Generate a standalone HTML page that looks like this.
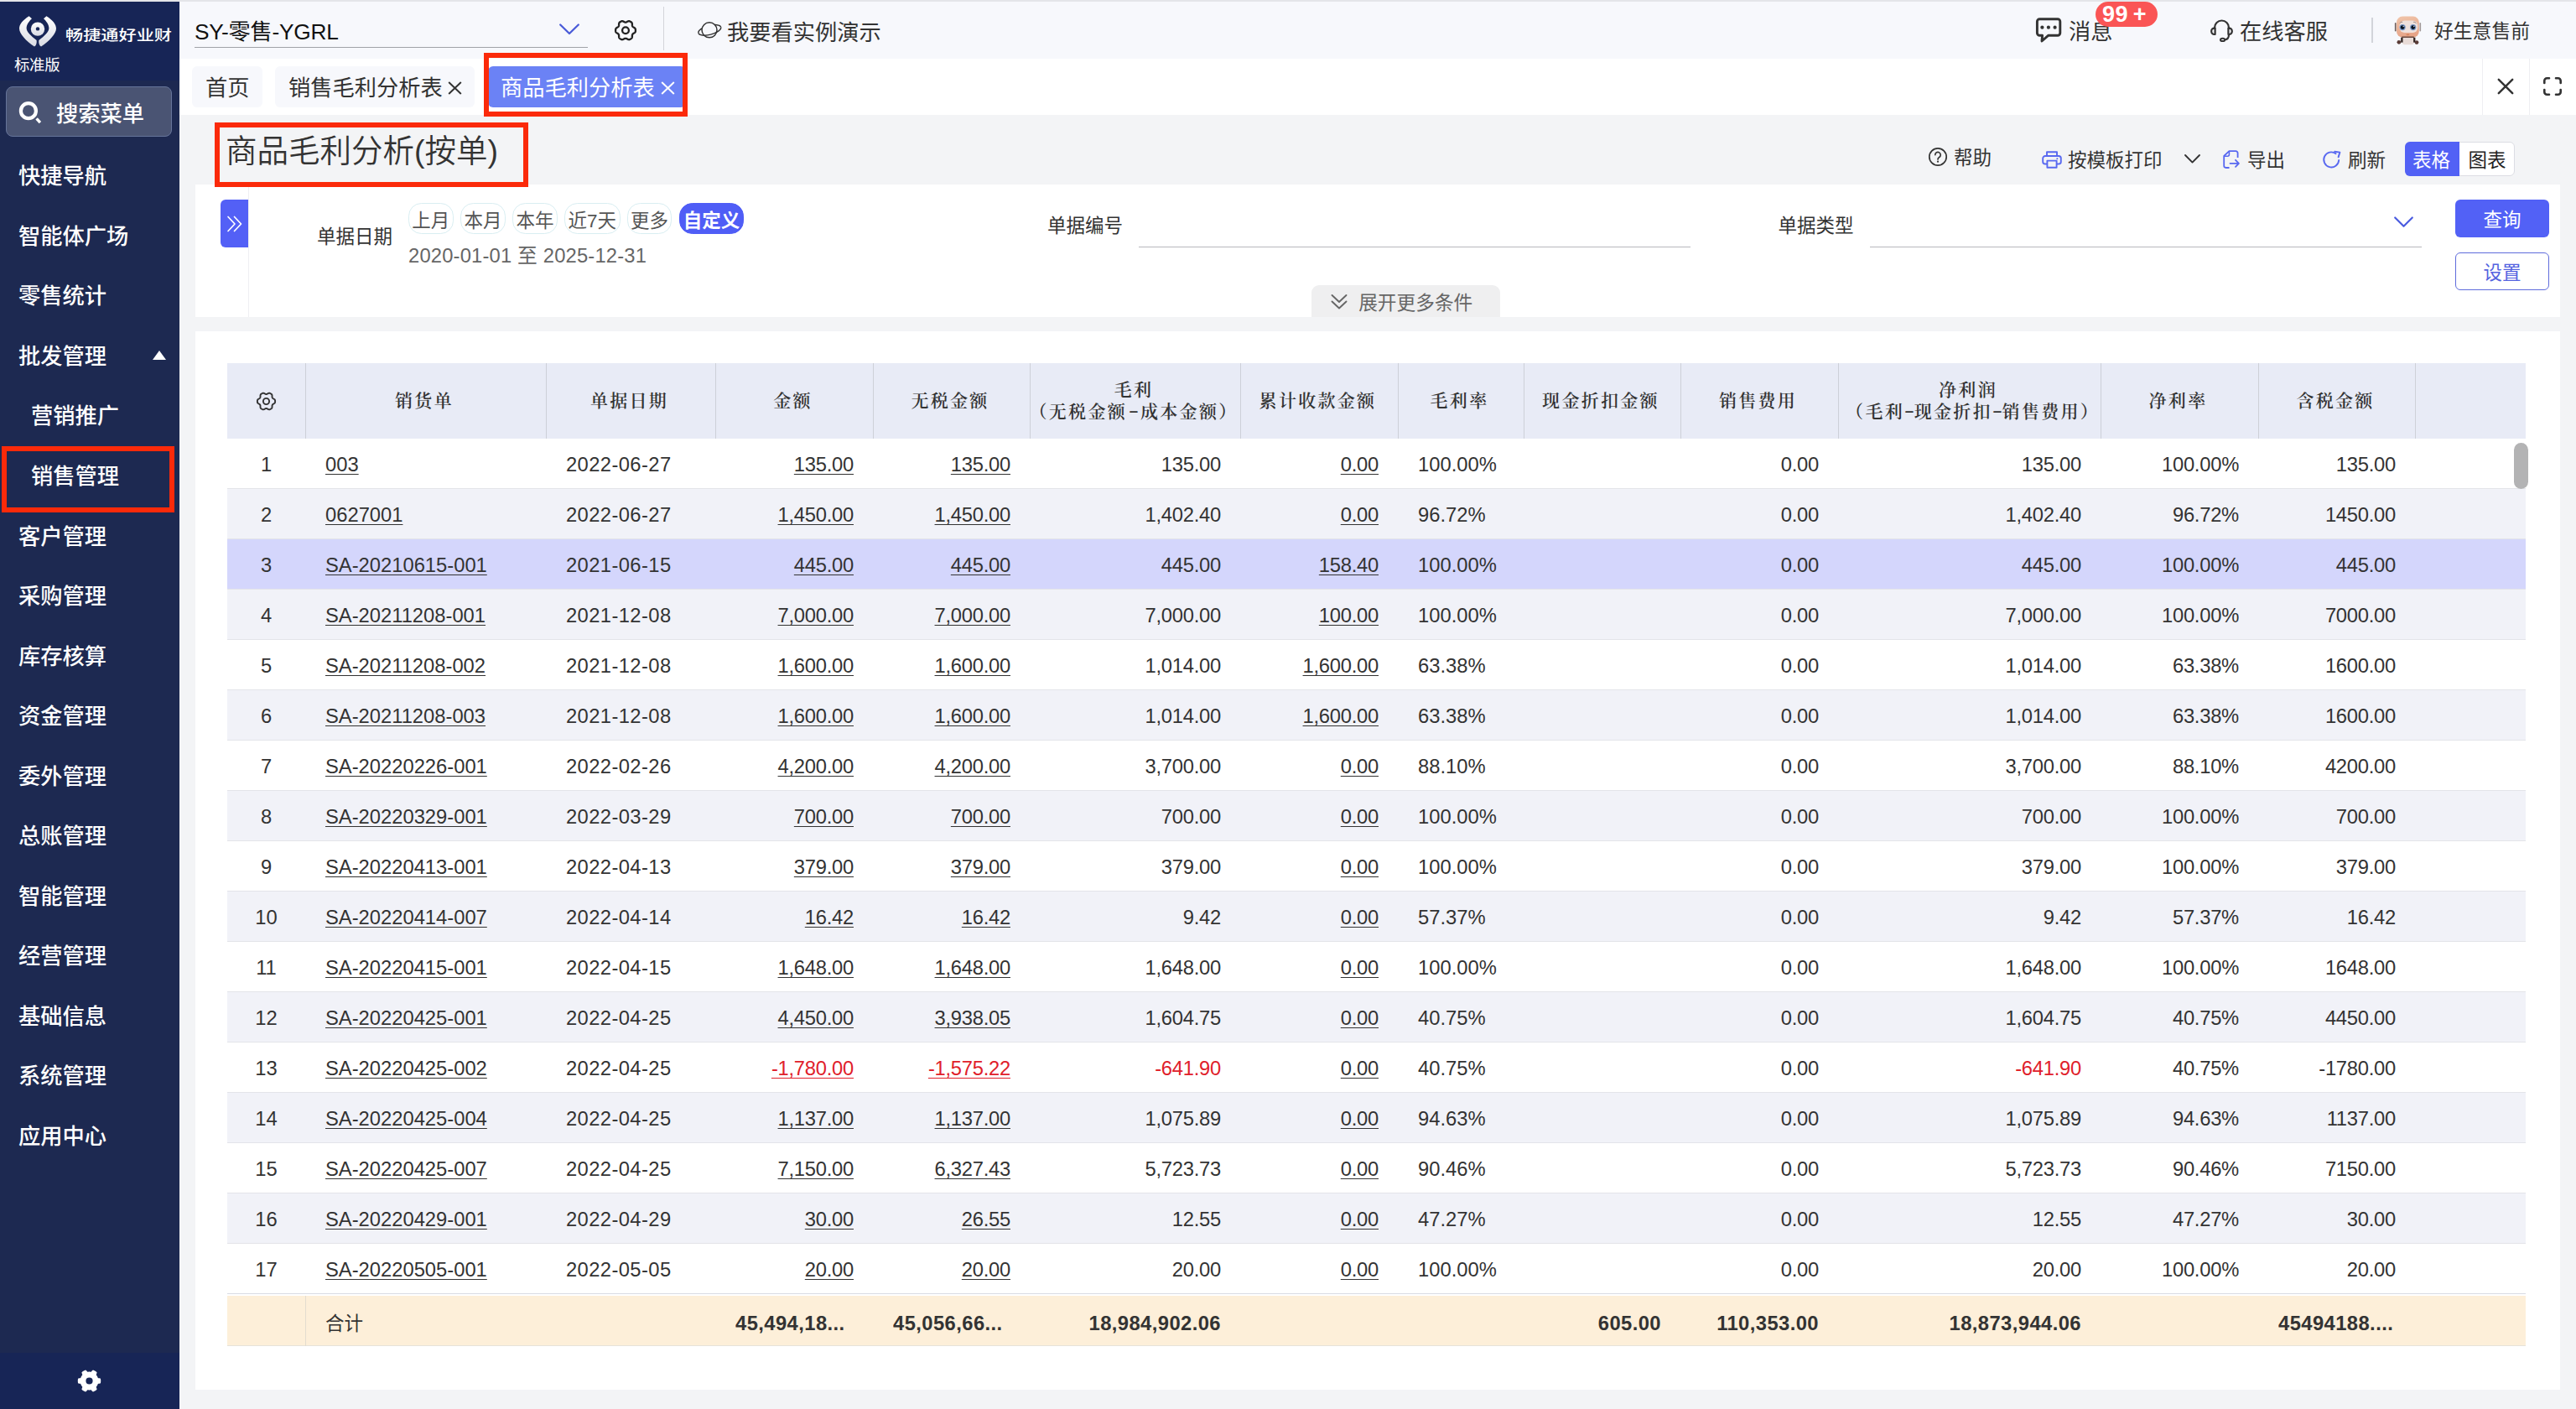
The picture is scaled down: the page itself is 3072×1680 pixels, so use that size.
<!DOCTYPE html>
<html lang="zh-CN"><head><meta charset="utf-8"><title>商品毛利分析表</title>
<style>
*{box-sizing:border-box;margin:0;padding:0}
html,body{width:3072px;height:1680px;overflow:hidden;background:#f3f4f6}
body{font-family:"Liberation Sans","Noto Sans CJK SC",sans-serif;color:#333;position:relative;-webkit-font-smoothing:antialiased}
.a{position:absolute}
.t{position:absolute;white-space:nowrap;height:40px;line-height:40px;margin-top:1.2px}
svg{position:absolute;overflow:visible}
.menu{color:#fff;font-size:26.25px;font-weight:500}
.tab{position:absolute;top:79px;height:49px;border-radius:6px;background:#f7f8fc}
.f26{font-size:26.25px}
.f22{font-size:22.5px}
.f23{font-size:23.75px}
.chip{position:absolute;top:242px;height:37px;border:1px solid #d9eef2;border-radius:15.5px;font-size:22.5px;line-height:42px;text-align:center;color:#555;white-space:nowrap;background:#fff}
.red{position:absolute;border:6px solid #fb2a0a;z-index:10}
.hd{position:absolute;top:433px;height:90px;background:#e8ebf6;border-left:1px solid #cdd0d8;font-family:"Liberation Serif","Noto Serif CJK SC",serif;font-weight:600;font-size:21px;letter-spacing:2.3px;color:#333;text-align:center;display:flex;align-items:center;justify-content:center;line-height:25.8px;padding-right:4px;padding-top:1.8px;white-space:nowrap}
.hy{display:inline-block;width:11.7px;text-align:center;letter-spacing:0;margin-right:0;transform:translateY(-2.5px) scaleX(1.7)}
.dt{letter-spacing:.4px}
.nm{letter-spacing:-.25px}
.row{position:absolute;left:271px;width:2741px;height:60px;border-bottom:1px solid #e3e4e9}
.c{position:absolute;top:0;height:59px;line-height:62.6px;font-size:23.75px;color:#333;white-space:nowrap;overflow:hidden}
.u{text-decoration:underline;text-decoration-thickness:1.3px;text-underline-offset:2.6px}
.neg{color:#e0202a}
.tot .c{line-height:66px}
.b{font-weight:700;letter-spacing:.43px}
</style></head>
<body>
<div class="a" style="left:0;top:0;width:3072px;height:2px;background:#e4e5e9"></div>
<div class="a" style="left:214px;top:2px;width:2858px;height:68px;background:#f7f8fc"></div>
<div class="a" style="left:214px;top:70px;width:2858px;height:67px;background:#fff"></div>
<div class="a" style="left:0;top:2px;width:214px;height:1678px;background:#1d2951"></div>
<div class="a" style="left:0;top:2px;width:214px;height:94px;background:#172556"></div>
<div class="a" style="left:0;top:1613px;width:214px;height:67px;background:#172556"></div>
<svg style="left:23px;top:19px" width="44" height="37" viewBox="0 0 44 37">
<defs><linearGradient id="lg" x1="0" y1="0" x2="0" y2="1"><stop offset="0" stop-color="#fff"/><stop offset="1" stop-color="#d9dbe3"/></linearGradient></defs>
<path d="M11.6 0.2 C4 5 0 10 0 15 C0 21 8 30 18 36.6 C20.5 35 21 32 20.6 29 C14 24 8.6 19 8.6 14.6 C8.6 10 12 6 15 3.2 Z" fill="url(#lg)"/>
<path d="M32.4 0.2 C40 5 44 10 44 15 C44 21 36 30 26 36.6 C23.5 35 23 32 23.4 29 C30 24 35.400 19 35.4 14.6 C35.4 10 32 6 29 3.2 Z" fill="url(#lg)"/>
<circle cx="22" cy="15.6" r="8.2" fill="url(#lg)"/><circle cx="22" cy="15.4" r="2.2" fill="#172556"/>
</svg>
<div class="t" style="left:78px;top:22px;font-size:17px;font-weight:500;color:#fff;transform:scaleX(1.245);transform-origin:0 50%;letter-spacing:0">畅捷通好业财</div>
<div class="t" style="left:17px;top:57px;font-size:18.4px;color:#fff;letter-spacing:-0.3px">标准版</div>
<div class="a" style="left:7px;top:103px;width:198px;height:60px;border-radius:8px;background:#4a5473;border:1px solid #66749a"></div>
<svg style="left:22px;top:120px" width="30" height="30" viewBox="0 0 30 30"><circle cx="11.9" cy="12.2" r="9" fill="none" stroke="#fff" stroke-width="4.2"/><path d="M21.6 21.4 L25.9 26.1" stroke="#fff" stroke-width="3.4"/></svg>
<div class="t menu" style="left:67px;top:115px">搜索菜单</div>
<div class="t menu" style="left:22px;top:189.2px">快捷导航</div>
<div class="t menu" style="left:22px;top:260.8px">智能体广场</div>
<div class="t menu" style="left:22px;top:332.3px">零售统计</div>
<div class="t menu" style="left:22px;top:403.8px">批发管理</div>
<div class="t menu" style="left:37px;top:475.3px">营销推广</div>
<div class="t menu" style="left:37px;top:546.8px">销售管理</div>
<div class="t menu" style="left:22px;top:618.4px">客户管理</div>
<div class="t menu" style="left:22px;top:689.9px">采购管理</div>
<div class="t menu" style="left:22px;top:761.4px">库存核算</div>
<div class="t menu" style="left:22px;top:832.9px">资金管理</div>
<div class="t menu" style="left:22px;top:904.4px">委外管理</div>
<div class="t menu" style="left:22px;top:976.0px">总账管理</div>
<div class="t menu" style="left:22px;top:1047.5px">智能管理</div>
<div class="t menu" style="left:22px;top:1119.0px">经营管理</div>
<div class="t menu" style="left:22px;top:1190.5px">基础信息</div>
<div class="t menu" style="left:22px;top:1262.0px">系统管理</div>
<div class="t menu" style="left:22px;top:1333.6px">应用中心</div>
<svg style="left:182px;top:418px" width="16" height="11" viewBox="0 0 16 11"><path d="M8 0 L16 11 L0 11 Z" fill="#fff"/></svg>
<svg style="left:93px;top:1633px" width="27" height="27" viewBox="0 0 27 27"><path d="M13.50 2.60 L13.86 2.61 L14.21 2.62 L14.57 2.65 L14.92 2.69 L15.28 2.75 L15.63 2.79 L16.09 2.37 L16.68 1.62 L17.32 0.89 L17.90 0.55 L18.33 0.68 L18.74 0.84 L19.15 1.02 L19.56 1.21 L19.96 1.42 L20.35 1.64 L20.73 1.87 L21.11 2.11 L21.48 2.36 L21.84 2.63 L22.19 2.91 L22.52 3.22 L22.51 3.88 L22.20 4.80 L21.84 5.69 L21.71 6.30 L21.93 6.59 L22.15 6.86 L22.36 7.15 L22.56 7.44 L22.76 7.74 L22.94 8.05 L23.11 8.36 L23.28 8.68 L23.43 9.00 L23.57 9.33 L23.70 9.66 L23.84 9.99 L24.43 10.18 L25.38 10.32 L26.33 10.51 L26.91 10.83 L27.02 11.27 L27.08 11.71 L27.13 12.16 L27.17 12.60 L27.19 13.05 L27.20 13.50 L27.19 13.95 L27.17 14.40 L27.13 14.84 L27.08 15.29 L27.02 15.73 L26.91 16.17 L26.33 16.49 L25.38 16.68 L24.43 16.82 L23.84 17.01 L23.70 17.34 L23.57 17.67 L23.43 18.00 L23.28 18.32 L23.11 18.64 L22.94 18.95 L22.76 19.26 L22.56 19.56 L22.36 19.85 L22.15 20.14 L21.93 20.41 L21.71 20.70 L21.84 21.31 L22.20 22.20 L22.51 23.12 L22.52 23.78 L22.19 24.09 L21.84 24.37 L21.48 24.64 L21.11 24.89 L20.73 25.13 L20.35 25.36 L19.96 25.58 L19.56 25.79 L19.15 25.98 L18.74 26.16 L18.33 26.32 L17.90 26.45 L17.32 26.11 L16.68 25.38 L16.09 24.63 L15.63 24.21 L15.28 24.25 L14.92 24.31 L14.57 24.35 L14.21 24.38 L13.86 24.39 L13.50 24.40 L13.14 24.39 L12.79 24.38 L12.43 24.35 L12.08 24.31 L11.72 24.25 L11.37 24.21 L10.91 24.63 L10.32 25.38 L9.68 26.11 L9.10 26.45 L8.67 26.32 L8.26 26.16 L7.85 25.98 L7.44 25.79 L7.04 25.58 L6.65 25.36 L6.27 25.13 L5.89 24.89 L5.52 24.64 L5.16 24.37 L4.81 24.09 L4.48 23.78 L4.49 23.12 L4.80 22.20 L5.16 21.31 L5.29 20.70 L5.07 20.41 L4.85 20.14 L4.64 19.85 L4.44 19.56 L4.24 19.26 L4.06 18.95 L3.89 18.64 L3.72 18.32 L3.57 18.00 L3.43 17.67 L3.30 17.34 L3.16 17.01 L2.57 16.82 L1.62 16.68 L0.67 16.49 L0.09 16.17 L-0.02 15.73 L-0.08 15.29 L-0.13 14.84 L-0.17 14.40 L-0.19 13.95 L-0.20 13.50 L-0.19 13.05 L-0.17 12.60 L-0.13 12.16 L-0.08 11.71 L-0.02 11.27 L0.09 10.83 L0.67 10.51 L1.62 10.32 L2.57 10.18 L3.16 9.99 L3.30 9.66 L3.43 9.33 L3.57 9.00 L3.72 8.68 L3.89 8.36 L4.06 8.05 L4.24 7.74 L4.44 7.44 L4.64 7.15 L4.85 6.86 L5.07 6.59 L5.29 6.30 L5.16 5.69 L4.80 4.80 L4.49 3.88 L4.48 3.22 L4.81 2.91 L5.16 2.63 L5.52 2.36 L5.89 2.11 L6.27 1.87 L6.65 1.64 L7.04 1.42 L7.44 1.21 L7.85 1.02 L8.26 0.84 L8.67 0.68 L9.10 0.55 L9.68 0.89 L10.32 1.62 L10.91 2.37 L11.37 2.79 L11.72 2.75 L12.08 2.69 L12.43 2.65 L12.79 2.62 L13.14 2.61 Z M13.5 9.4 A4.1 4.1 0 1 0 13.5 17.6 A4.1 4.1 0 1 0 13.5 9.4 Z" fill="#fff" fill-rule="evenodd"/></svg>
<div class="t f26" style="left:232px;top:17px;color:#111;letter-spacing:-.25px">SY-零售-YGRL</div>
<div class="a" style="left:232px;top:56px;width:469px;height:1px;background:#a0a2a8"></div>
<svg style="left:667px;top:28px" width="24" height="14" viewBox="0 0 24 14"><path d="M1.2 1.5 L12 12 L22.8 1.5" fill="none" stroke="#4a5bd8" stroke-width="2.3" stroke-linecap="round" stroke-linejoin="round"/></svg>
<svg style="left:733px;top:23.6px" width="26" height="25" viewBox="0 0 26 25"><path d="M13.00 2.60 L13.31 2.61 L13.63 2.57 L13.96 2.46 L14.30 2.29 L14.67 2.09 L15.06 1.87 L15.46 1.65 L15.88 1.45 L16.31 1.29 L16.74 1.19 L17.16 1.16 L17.55 1.22 L17.91 1.36 L18.26 1.53 L18.61 1.71 L18.95 1.89 L19.28 2.09 L19.61 2.31 L19.93 2.53 L20.24 2.77 L20.48 3.08 L20.67 3.46 L20.79 3.88 L20.87 4.33 L20.91 4.79 L20.92 5.25 L20.92 5.70 L20.93 6.11 L20.96 6.50 L21.03 6.84 L21.15 7.13 L21.31 7.40 L21.47 7.67 L21.66 7.93 L21.92 8.16 L22.24 8.37 L22.59 8.59 L22.98 8.81 L23.37 9.06 L23.75 9.32 L24.10 9.61 L24.40 9.93 L24.64 10.28 L24.79 10.65 L24.84 11.03 L24.87 11.42 L24.89 11.81 L24.90 12.20 L24.89 12.59 L24.87 12.98 L24.84 13.37 L24.79 13.75 L24.64 14.12 L24.40 14.47 L24.10 14.79 L23.75 15.08 L23.37 15.34 L22.98 15.59 L22.59 15.81 L22.24 16.03 L21.92 16.24 L21.66 16.47 L21.47 16.73 L21.31 17.00 L21.15 17.27 L21.03 17.56 L20.96 17.90 L20.93 18.29 L20.92 18.70 L20.92 19.15 L20.91 19.61 L20.87 20.07 L20.79 20.52 L20.67 20.94 L20.48 21.32 L20.24 21.63 L19.93 21.87 L19.61 22.09 L19.28 22.31 L18.95 22.51 L18.61 22.69 L18.26 22.87 L17.91 23.04 L17.55 23.18 L17.16 23.24 L16.74 23.21 L16.31 23.11 L15.88 22.95 L15.46 22.75 L15.06 22.53 L14.67 22.31 L14.30 22.11 L13.96 21.94 L13.63 21.83 L13.31 21.79 L13.00 21.80 L12.69 21.79 L12.37 21.83 L12.04 21.94 L11.70 22.11 L11.33 22.31 L10.94 22.53 L10.54 22.75 L10.12 22.95 L9.69 23.11 L9.26 23.21 L8.84 23.24 L8.45 23.18 L8.09 23.04 L7.74 22.87 L7.39 22.69 L7.05 22.51 L6.72 22.31 L6.39 22.09 L6.07 21.87 L5.76 21.63 L5.52 21.32 L5.33 20.94 L5.21 20.52 L5.13 20.07 L5.09 19.61 L5.08 19.15 L5.08 18.70 L5.07 18.29 L5.04 17.90 L4.97 17.56 L4.85 17.27 L4.69 17.00 L4.53 16.73 L4.34 16.47 L4.08 16.24 L3.76 16.03 L3.41 15.81 L3.02 15.59 L2.63 15.34 L2.25 15.08 L1.90 14.79 L1.60 14.47 L1.36 14.12 L1.21 13.75 L1.16 13.37 L1.13 12.98 L1.11 12.59 L1.10 12.20 L1.11 11.81 L1.13 11.42 L1.16 11.03 L1.21 10.65 L1.36 10.28 L1.60 9.93 L1.90 9.61 L2.25 9.32 L2.63 9.06 L3.02 8.81 L3.41 8.59 L3.76 8.37 L4.08 8.16 L4.34 7.93 L4.53 7.67 L4.69 7.40 L4.85 7.13 L4.97 6.84 L5.04 6.50 L5.07 6.11 L5.08 5.70 L5.08 5.25 L5.09 4.79 L5.13 4.33 L5.21 3.88 L5.33 3.46 L5.52 3.08 L5.76 2.77 L6.07 2.53 L6.39 2.31 L6.72 2.09 L7.05 1.89 L7.39 1.71 L7.74 1.53 L8.09 1.36 L8.45 1.22 L8.84 1.16 L9.26 1.19 L9.69 1.29 L10.12 1.45 L10.54 1.65 L10.94 1.87 L11.33 2.09 L11.70 2.29 L12.04 2.46 L12.37 2.57 L12.69 2.61 Z" fill="none" stroke="#222" stroke-width="2.3" stroke-linejoin="round"/><circle cx="13" cy="12.2" r="3.9" fill="none" stroke="#222" stroke-width="2.3"/></svg>
<div class="a" style="left:791px;top:8px;width:1px;height:52px;background:#d3d4da"></div>
<svg style="left:832px;top:24px" width="29" height="24" viewBox="0 0 29 24"><g transform="translate(14.3 11.9) rotate(-14.5)"><path d="M-13.8 0 A13.8 5.4 0 0 1 13.8 0" fill="none" stroke="#333" stroke-width="1.5"/></g><circle cx="14" cy="11.8" r="9" fill="#f7f8fc" stroke="#333" stroke-width="1.5"/><g transform="translate(14.3 11.9) rotate(-14.5)"><path d="M-13.8 0 A13.8 5.4 0 0 0 13.8 0" fill="none" stroke="#333" stroke-width="1.5"/></g></svg>
<div class="t f26" style="left:867px;top:18px">我要看实例演示</div>
<svg style="left:2427px;top:21px" width="32" height="31" viewBox="0 0 32 31"><path d="M5.4 1.7 H26.8 a3 3 0 0 1 3 3 V18.3 a3 3 0 0 1 -3 3 H15.6 L8 28 L8.6 21.3 H5.4 a3 3 0 0 1 -3 -3 V4.7 a3 3 0 0 1 3 -3 Z" fill="none" stroke="#333" stroke-width="2.9" stroke-linejoin="round"/><circle cx="8.4" cy="11.7" r="2.1" fill="#333"/><circle cx="15.9" cy="11.7" r="2.1" fill="#333"/><circle cx="23.6" cy="11.7" r="2.1" fill="#333"/></svg>
<div class="t f26" style="left:2467px;top:17px">消息</div>
<div class="a" style="left:2499px;top:2px;width:74px;height:30px;border-radius:15px;background:#fa5555;color:#fff;font-weight:700;font-size:27px;letter-spacing:.5px;word-spacing:-2.5px;padding-right:5px;line-height:31px;text-align:center;white-space:nowrap">99 +</div>
<svg style="left:2636px;top:22px" width="27" height="28" viewBox="0 0 27 28"><path d="M5 12.5 V11 a8.5 8.5 0 0 1 17 0 V12.5" fill="none" stroke="#333" stroke-width="2.2"/><path d="M5.6 11.6 H4.6 a3.4 3.4 0 0 0 -3.4 3.4 v0.600 a3.4 3.4 0 0 0 3.4 3.4 H5.6 Z" fill="none" stroke="#333" stroke-width="2.2" stroke-linejoin="round"/><path d="M21.4 11.6 H22.4 a3.4 3.4 0 0 1 3.4 3.4 v0.600 a3.4 3.4 0 0 1 -3.400 3.4 H21.4 Z" fill="none" stroke="#333" stroke-width="2.2" stroke-linejoin="round"/><path d="M22 19.400 C22 23.500 19.500 25.200 16.500 25.400" fill="none" stroke="#333" stroke-width="2.200"/><ellipse cx="14.6" cy="25.400" rx="2.6" ry="1.700" fill="none" stroke="#333" stroke-width="2"/></svg>
<div class="t f26" style="left:2671px;top:17px">在线客服</div>
<div class="a" style="left:2828px;top:21px;width:2px;height:30px;background:#d2d4da"></div>
<svg style="left:2855px;top:19px" width="33" height="35" viewBox="0 0 33 35">
<defs><linearGradient id="hg" x1="0" y1="0" x2="0.3" y2="1"><stop offset="0" stop-color="#f1c6ab"/><stop offset="1" stop-color="#e6a488"/></linearGradient></defs>
<rect x="0.9" y="8" width="1.6" height="10.6" rx="0.8" fill="#4a3630" opacity="0.8"/><rect x="30.5" y="8" width="1.6" height="10.6" rx="0.8" fill="#4a3630" opacity="0.5"/>
<path d="M9.9 25 H23.7 V31.5 a2.8 2.8 0 0 1 -2.8 2.8 H12.7 a2.8 2.8 0 0 1 -2.8 -2.8 Z" fill="#e9dcd8"/>
<rect x="8.2" y="25.6" width="2.3" height="6" fill="#2e2220"/><rect x="23.1" y="25.6" width="2.3" height="6" fill="#2e2220"/>
<circle cx="5.9" cy="31.3" r="2.4" fill="#5b3d38"/><circle cx="27" cy="31.6" r="2.400" fill="#5b3d38"/>
<rect x="3" y="0.6" width="26.8" height="24.900" rx="7" fill="url(#hg)"/>
<rect x="9" y="24.600" width="15" height="1.300" rx="0.600" fill="#6a4a40"/>
<rect x="6.5" y="5.4" width="21.800" height="14.600" rx="6" fill="#efe1dc"/>
<path d="M6.900 8.500 Q8.300 6.700 9.700 7.200 M23.500 7.200 Q25 6.700 26.300 8.500" fill="none" stroke="#8d7d78" stroke-width="0.900" stroke-linecap="round"/>
<circle cx="10.1" cy="13.6" r="3.600" fill="#7595c6"/><circle cx="22.7" cy="13.6" r="3.600" fill="#7595c6"/>
<circle cx="10.1" cy="13.6" r="2.400" fill="#0b1420"/><circle cx="22.700" cy="13.6" r="2.400" fill="#0b1420"/>
<circle cx="11.200" cy="12.500" r="0.700" fill="#dfe9f5"/><circle cx="23.800" cy="12.500" r="0.700" fill="#dfe9f5"/>
<ellipse cx="16.4" cy="22.300" rx="2" ry="0.900" fill="#d5835c"/>
</svg>
<div class="t" style="left:2903px;top:16px;font-size:22.8px">好生意售前</div>
<div class="tab" style="left:229px;width:84px"></div><div class="t f26" style="left:245px;top:84px">首页</div>
<div class="tab" style="left:328px;width:238px"></div><div class="t f26" style="left:344px;top:84px">销售毛利分析表</div>
<svg style="left:534px;top:97px" width="17" height="16" viewBox="0 0 17 16"><path d="M1.200 1 L15.800 15 M15.800 1 L1.200 15" stroke="#333" stroke-width="2" fill="none"/></svg>
<div class="tab" style="left:582px;width:236px;background:#6b82f5"></div><div class="t f26" style="left:597px;top:84px;color:#fff">商品毛利分析表</div>
<svg style="left:788px;top:97px" width="17" height="16" viewBox="0 0 17 16"><path d="M1.200 1 L15.800 15 M15.800 1 L1.200 15" stroke="#fff" stroke-width="2" fill="none"/></svg>
<div class="a" style="left:2960px;top:70px;width:1px;height:67px;background:#eeeef2"></div><div class="a" style="left:3016px;top:70px;width:1px;height:67px;background:#eeeef2"></div>
<svg style="left:2978px;top:93px" width="20" height="20" viewBox="0 0 20 20"><path d="M1.800 1.800 L18.200 18.200 M18.200 1.800 L1.800 18.200" stroke="#333" stroke-width="2.500" stroke-linecap="round" fill="none"/></svg>
<svg style="left:3033px;top:92px" width="22" height="22" viewBox="0 0 22 22"><path d="M1.300 7 V4.300 a3 3 0 0 1 3 -3 H7 M15 1.300 H17.700 a3 3 0 0 1 3 3 V7 M20.700 15 V17.700 a3 3 0 0 1 -3 3 H15 M7 20.700 H4.300 a3 3 0 0 1 -3 -3 V15" stroke="#333" stroke-width="2.600" stroke-linecap="round" fill="none"/></svg>
<div class="red" style="left:577px;top:63px;width:243px;height:76px"></div>
<div class="t" style="left:269px;top:159.3px;font-size:37.5px;color:#333;font-weight:350">商品毛利分析(按单)</div>
<div class="red" style="left:256px;top:146px;width:374px;height:76.500px"></div>
<svg style="left:2300px;top:176px" width="22" height="22" viewBox="0 0 22 22"><circle cx="11" cy="11" r="10.200" fill="none" stroke="#333" stroke-width="1.700"/><path d="M7.800 8.600 a3.200 3.200 0 1 1 4.800 2.800 c-1.200 0.700 -1.600 1.300 -1.600 2.600" fill="none" stroke="#333" stroke-width="1.700" stroke-linecap="round"/><circle cx="11" cy="16.700" r="1.100" fill="#333"/></svg>
<div class="t f22" style="left:2330px;top:168px">帮助</div>
<svg style="left:2435px;top:180px" width="24" height="21" viewBox="0 0 24 21"><path d="M6 6 V1.200 H18 V6" fill="none" stroke="#5868f0" stroke-width="1.9" stroke-linejoin="round"/><path d="M6 15.500 H4 a2.800 2.800 0 0 1 -2.800 -2.800 V8.800 a2.800 2.800 0 0 1 2.800 -2.800 H20 a2.800 2.800 0 0 1 2.800 2.800 V12.700 a2.800 2.800 0 0 1 -2.800 2.800 H18" fill="none" stroke="#5868f0" stroke-width="1.9"/><rect x="6.400" y="11.600" width="11.200" height="8.200" fill="none" stroke="#5868f0" stroke-width="1.9" stroke-linejoin="round"/><circle cx="18.300" cy="9.300" r="1" fill="#5868f0"/></svg>
<div class="t f22" style="left:2466px;top:171px">按模板打印</div>
<svg style="left:2605px;top:184px" width="19" height="11" viewBox="0 0 19 11"><path d="M1 1 L9.500 9.600 L18 1" fill="none" stroke="#333" stroke-width="1.900" stroke-linecap="round" stroke-linejoin="round"/></svg>
<svg style="left:2651px;top:179px" width="20" height="22" viewBox="0 0 20 22"><path d="M17.600 9 V3.600 a2.400 2.400 0 0 0 -2.400 -2.400 H7.400 L1.200 7 V18.600 a2.400 2.400 0 0 0 2.400 2.400 H7.500" fill="none" stroke="#5868f0" stroke-width="1.800" stroke-linejoin="round"/><path d="M1.600 7.200 H5.800 a1.600 1.600 0 0 0 1.600 -1.600 V1.500" fill="none" stroke="#5868f0" stroke-width="1.600"/><path d="M8.500 15.800 H18.800 M15 11.800 L18.900 15.800 L15 19.800" fill="none" stroke="#5868f0" stroke-width="1.800" stroke-linejoin="round" stroke-linecap="round"/></svg>
<div class="t f22" style="left:2680px;top:171px">导出</div>
<svg style="left:2770px;top:180px" width="22" height="21" viewBox="0 0 22 21"><path d="M19.200 11 A9 9 0 1 1 15.600 3.200" fill="none" stroke="#5868f0" stroke-width="1.900" stroke-linecap="round"/><path d="M14.200 0.800 L20.400 1.600 L18.600 7.400" fill="none" stroke="#5868f0" stroke-width="1.900" stroke-linecap="round" stroke-linejoin="round"/></svg>
<div class="t f22" style="left:2800px;top:171px">刷新</div>
<div class="a" style="left:2868px;top:169px;width:131px;height:41px;border-radius:6px;background:#fff;border:1px solid #dcdde3"></div>
<div class="a" style="left:2868px;top:169px;width:65px;height:41px;border-radius:6px 0 0 6px;background:#5261f5"></div>
<div class="t f22" style="left:2877px;top:170.500px;color:#fff">表格</div><div class="t f22" style="left:2943.500px;top:170.500px;color:#222">图表</div>
<div class="a" style="left:233px;top:220px;width:2820px;height:158px;background:#fff"></div>
<div class="a" style="left:296px;top:220px;width:1px;height:158px;background:#efeff3"></div>
<div class="a" style="left:263px;top:238px;width:33px;height:57px;border-radius:6px 0 0 6px;background:#5360f6"></div>
<svg style="left:270px;top:257px" width="20" height="20" viewBox="0 0 20 20"><path d="M2 1.500 L10 10 L2 18.500 M9.500 1.500 L17.500 10 L9.500 18.500" fill="none" stroke="#fff" stroke-width="1.700" stroke-linecap="round" stroke-linejoin="round"/></svg>
<div class="t f22" style="left:378px;top:262px">单据日期</div>
<div class="chip" style="left:487px;width:53.5px">上月</div>
<div class="chip" style="left:549px;width:54px">本月</div>
<div class="chip" style="left:611px;width:54px">本年</div>
<div class="chip" style="left:673px;width:66.5px">近7天</div>
<div class="chip" style="left:748px;width:53px">更多</div>
<div class="chip" style="left:810px;width:77px;background:#4f5df6;border-color:#4f5df6;color:#fff;font-weight:700">自定义</div>
<div class="t f23" style="left:487px;top:284px;color:#666;letter-spacing:.18px">2020-01-01 至 2025-12-31</div>
<div class="t f22" style="left:1249px;top:248.500px">单据编号</div>
<div class="a" style="left:1358px;top:294px;width:658px;height:1px;background:#b7b8bd"></div>
<div class="t f22" style="left:2120.500px;top:248.500px">单据类型</div>
<div class="a" style="left:2230px;top:294px;width:658px;height:1px;background:#b7b8bd"></div>
<svg style="left:2855px;top:258px" width="23" height="14" viewBox="0 0 23 14"><path d="M1.200 1.500 L11.500 11.800 L21.800 1.500" fill="none" stroke="#4a5be0" stroke-width="2.200" stroke-linecap="round" stroke-linejoin="round"/></svg>
<div class="a" style="left:2928px;top:238px;width:112px;height:45px;border-radius:6px;background:#5261f6;color:#fff;font-size:22.500px;line-height:50px;text-align:center">查询</div>
<div class="a" style="left:2928px;top:301px;width:112px;height:45px;border-radius:6px;background:#fff;border:1px solid #5f6cdc;color:#5564e0;font-size:22.500px;line-height:48px;text-align:center">设置</div>
<div class="a" style="left:1564px;top:340px;width:225px;height:38px;border-radius:9px 9px 0 0;background:#efeff0"></div>
<svg style="left:1587px;top:349.8px" width="20" height="20" viewBox="0 0 20 20"><path d="M1.500 2 L10 10 L18.500 2 M1.500 9.500 L10 17.500 L18.500 9.500" fill="none" stroke="#666" stroke-width="1.900" stroke-linecap="round" stroke-linejoin="round"/></svg>
<div class="t" style="left:1620.2px;top:339.8px;color:#666;font-size:22.7px">展开更多条件</div>
<div class="a" style="left:233px;top:395px;width:2820px;height:1262px;background:#fff"></div>
<div class="hd" style="left:271px;width:93px;border-left:none;"><div></div></div>
<div class="hd" style="left:364px;width:287px;"><div>销货单</div></div>
<div class="hd" style="left:651px;width:202px;"><div>单据日期</div></div>
<div class="hd" style="left:853px;width:188px;"><div>金额</div></div>
<div class="hd" style="left:1041px;width:187px;"><div>无税金额</div></div>
<div class="hd" style="left:1228px;width:251px;"><div>毛利<br>（无税金额<span class="hy" style="width:16px">-</span>成本金额）</div></div>
<div class="hd" style="left:1479px;width:188px;"><div>累计收款金额</div></div>
<div class="hd" style="left:1667px;width:150px;"><div>毛利率</div></div>
<div class="hd" style="left:1817px;width:187px;"><div>现金折扣金额</div></div>
<div class="hd" style="left:2004px;width:188px;"><div>销售费用</div></div>
<div class="hd" style="left:2192px;width:313px;"><div>净利润<br><span style="position:relative;left:5.6px">（毛利<span class="hy">-</span>现金折扣<span class="hy">-</span>销售费用）</span></div></div>
<div class="hd" style="left:2505px;width:188px;"><div>净利率</div></div>
<div class="hd" style="left:2693px;width:187px;"><div>含税金额</div></div>
<div class="hd" style="left:2880px;width:132px;"><div></div></div>
<svg style="left:306px;top:467px" width="23" height="23" viewBox="0 0 23 23"><path d="M11.50 3.00 L11.78 3.00 L12.06 2.97 L12.35 2.87 L12.66 2.71 L12.98 2.53 L13.32 2.33 L13.69 2.12 L14.06 1.94 L14.44 1.80 L14.83 1.70 L15.20 1.67 L15.55 1.72 L15.87 1.84 L16.19 1.99 L16.50 2.15 L16.80 2.32 L17.10 2.50 L17.39 2.69 L17.67 2.88 L17.95 3.10 L18.16 3.38 L18.32 3.72 L18.43 4.10 L18.50 4.50 L18.53 4.92 L18.53 5.33 L18.53 5.73 L18.53 6.11 L18.55 6.45 L18.61 6.75 L18.72 7.01 L18.86 7.25 L19.00 7.49 L19.17 7.72 L19.40 7.92 L19.69 8.11 L20.01 8.30 L20.36 8.49 L20.71 8.71 L21.06 8.94 L21.38 9.20 L21.65 9.48 L21.86 9.79 L22.00 10.12 L22.05 10.46 L22.08 10.81 L22.09 11.15 L22.10 11.50 L22.09 11.85 L22.08 12.19 L22.05 12.54 L22.00 12.88 L21.86 13.21 L21.65 13.52 L21.38 13.80 L21.06 14.06 L20.71 14.29 L20.36 14.51 L20.01 14.70 L19.69 14.89 L19.40 15.08 L19.17 15.28 L19.00 15.51 L18.86 15.75 L18.72 15.99 L18.61 16.25 L18.55 16.55 L18.53 16.89 L18.53 17.27 L18.53 17.67 L18.53 18.08 L18.50 18.50 L18.43 18.90 L18.32 19.28 L18.16 19.62 L17.95 19.90 L17.67 20.12 L17.39 20.31 L17.10 20.50 L16.80 20.68 L16.50 20.85 L16.19 21.01 L15.87 21.16 L15.55 21.28 L15.20 21.33 L14.83 21.30 L14.44 21.20 L14.06 21.06 L13.69 20.88 L13.32 20.67 L12.98 20.47 L12.66 20.29 L12.35 20.13 L12.06 20.03 L11.78 20.00 L11.50 20.00 L11.22 20.00 L10.94 20.03 L10.65 20.13 L10.34 20.29 L10.02 20.47 L9.68 20.67 L9.31 20.88 L8.94 21.06 L8.56 21.20 L8.17 21.30 L7.80 21.33 L7.45 21.28 L7.13 21.16 L6.81 21.01 L6.50 20.85 L6.20 20.68 L5.90 20.50 L5.61 20.31 L5.33 20.12 L5.05 19.90 L4.84 19.62 L4.68 19.28 L4.57 18.90 L4.50 18.50 L4.47 18.08 L4.47 17.67 L4.47 17.27 L4.47 16.89 L4.45 16.55 L4.39 16.25 L4.28 15.99 L4.14 15.75 L4.00 15.51 L3.83 15.28 L3.60 15.08 L3.31 14.89 L2.99 14.70 L2.64 14.51 L2.29 14.29 L1.94 14.06 L1.62 13.80 L1.35 13.52 L1.14 13.21 L1.00 12.88 L0.95 12.54 L0.92 12.19 L0.91 11.85 L0.90 11.50 L0.91 11.15 L0.92 10.81 L0.95 10.46 L1.00 10.12 L1.14 9.79 L1.35 9.48 L1.62 9.20 L1.94 8.94 L2.29 8.71 L2.64 8.49 L2.99 8.30 L3.31 8.11 L3.60 7.92 L3.83 7.72 L4.00 7.49 L4.14 7.25 L4.28 7.01 L4.39 6.75 L4.45 6.45 L4.47 6.11 L4.47 5.73 L4.47 5.33 L4.47 4.92 L4.50 4.50 L4.57 4.10 L4.68 3.72 L4.84 3.38 L5.05 3.10 L5.33 2.88 L5.61 2.69 L5.90 2.50 L6.20 2.32 L6.50 2.15 L6.81 1.99 L7.13 1.84 L7.45 1.72 L7.80 1.67 L8.17 1.70 L8.56 1.80 L8.94 1.94 L9.31 2.12 L9.68 2.33 L10.02 2.53 L10.34 2.71 L10.65 2.87 L10.94 2.97 L11.22 3.00 Z" fill="none" stroke="#333" stroke-width="1.900" stroke-linejoin="round"/><circle cx="11.500" cy="11.500" r="3.600" fill="none" stroke="#333" stroke-width="1.900"/></svg>
<div class="row" style="top:523px;background:#fff"><div class="c" style="left:0px;width:93px;text-align:center"><span class="">1</span></div><div class="c" style="left:117px;width:263px;text-align:left"><span class="u">003</span></div><div class="c" style="left:404px;width:178px;text-align:left"><span class="dt">2022-06-27</span></div><div class="c" style="left:582px;width:165px;text-align:right"><span class="u nm">135.00</span></div><div class="c" style="left:770px;width:164px;text-align:right"><span class="u nm">135.00</span></div><div class="c" style="left:957px;width:228px;text-align:right"><span class="nm">135.00</span></div><div class="c" style="left:1208px;width:165px;text-align:right"><span class="u nm">0.00</span></div><div class="c" style="left:1420px;width:126px;text-align:left"><span class="">100.00%</span></div><div class="c" style="left:1733px;width:165px;text-align:right"><span class="nm">0.00</span></div><div class="c" style="left:1921px;width:290px;text-align:right"><span class="nm">135.00</span></div><div class="c" style="left:2234px;width:165px;text-align:right"><span class="nm">100.00%</span></div><div class="c" style="left:2422px;width:164px;text-align:right"><span class="nm">135.00</span></div></div>
<div class="row" style="top:583px;background:#f1f2f8"><div class="c" style="left:0px;width:93px;text-align:center"><span class="">2</span></div><div class="c" style="left:117px;width:263px;text-align:left"><span class="u">0627001</span></div><div class="c" style="left:404px;width:178px;text-align:left"><span class="dt">2022-06-27</span></div><div class="c" style="left:582px;width:165px;text-align:right"><span class="u nm">1,450.00</span></div><div class="c" style="left:770px;width:164px;text-align:right"><span class="u nm">1,450.00</span></div><div class="c" style="left:957px;width:228px;text-align:right"><span class="nm">1,402.40</span></div><div class="c" style="left:1208px;width:165px;text-align:right"><span class="u nm">0.00</span></div><div class="c" style="left:1420px;width:126px;text-align:left"><span class="">96.72%</span></div><div class="c" style="left:1733px;width:165px;text-align:right"><span class="nm">0.00</span></div><div class="c" style="left:1921px;width:290px;text-align:right"><span class="nm">1,402.40</span></div><div class="c" style="left:2234px;width:165px;text-align:right"><span class="nm">96.72%</span></div><div class="c" style="left:2422px;width:164px;text-align:right"><span class="nm">1450.00</span></div></div>
<div class="row" style="top:643px;background:#d4d6fc"><div class="c" style="left:0px;width:93px;text-align:center"><span class="">3</span></div><div class="c" style="left:117px;width:263px;text-align:left"><span class="u">SA-20210615-001</span></div><div class="c" style="left:404px;width:178px;text-align:left"><span class="dt">2021-06-15</span></div><div class="c" style="left:582px;width:165px;text-align:right"><span class="u nm">445.00</span></div><div class="c" style="left:770px;width:164px;text-align:right"><span class="u nm">445.00</span></div><div class="c" style="left:957px;width:228px;text-align:right"><span class="nm">445.00</span></div><div class="c" style="left:1208px;width:165px;text-align:right"><span class="u nm">158.40</span></div><div class="c" style="left:1420px;width:126px;text-align:left"><span class="">100.00%</span></div><div class="c" style="left:1733px;width:165px;text-align:right"><span class="nm">0.00</span></div><div class="c" style="left:1921px;width:290px;text-align:right"><span class="nm">445.00</span></div><div class="c" style="left:2234px;width:165px;text-align:right"><span class="nm">100.00%</span></div><div class="c" style="left:2422px;width:164px;text-align:right"><span class="nm">445.00</span></div></div>
<div class="row" style="top:703px;background:#f1f2f8"><div class="c" style="left:0px;width:93px;text-align:center"><span class="">4</span></div><div class="c" style="left:117px;width:263px;text-align:left"><span class="u">SA-20211208-001</span></div><div class="c" style="left:404px;width:178px;text-align:left"><span class="dt">2021-12-08</span></div><div class="c" style="left:582px;width:165px;text-align:right"><span class="u nm">7,000.00</span></div><div class="c" style="left:770px;width:164px;text-align:right"><span class="u nm">7,000.00</span></div><div class="c" style="left:957px;width:228px;text-align:right"><span class="nm">7,000.00</span></div><div class="c" style="left:1208px;width:165px;text-align:right"><span class="u nm">100.00</span></div><div class="c" style="left:1420px;width:126px;text-align:left"><span class="">100.00%</span></div><div class="c" style="left:1733px;width:165px;text-align:right"><span class="nm">0.00</span></div><div class="c" style="left:1921px;width:290px;text-align:right"><span class="nm">7,000.00</span></div><div class="c" style="left:2234px;width:165px;text-align:right"><span class="nm">100.00%</span></div><div class="c" style="left:2422px;width:164px;text-align:right"><span class="nm">7000.00</span></div></div>
<div class="row" style="top:763px;background:#fff"><div class="c" style="left:0px;width:93px;text-align:center"><span class="">5</span></div><div class="c" style="left:117px;width:263px;text-align:left"><span class="u">SA-20211208-002</span></div><div class="c" style="left:404px;width:178px;text-align:left"><span class="dt">2021-12-08</span></div><div class="c" style="left:582px;width:165px;text-align:right"><span class="u nm">1,600.00</span></div><div class="c" style="left:770px;width:164px;text-align:right"><span class="u nm">1,600.00</span></div><div class="c" style="left:957px;width:228px;text-align:right"><span class="nm">1,014.00</span></div><div class="c" style="left:1208px;width:165px;text-align:right"><span class="u nm">1,600.00</span></div><div class="c" style="left:1420px;width:126px;text-align:left"><span class="">63.38%</span></div><div class="c" style="left:1733px;width:165px;text-align:right"><span class="nm">0.00</span></div><div class="c" style="left:1921px;width:290px;text-align:right"><span class="nm">1,014.00</span></div><div class="c" style="left:2234px;width:165px;text-align:right"><span class="nm">63.38%</span></div><div class="c" style="left:2422px;width:164px;text-align:right"><span class="nm">1600.00</span></div></div>
<div class="row" style="top:823px;background:#f1f2f8"><div class="c" style="left:0px;width:93px;text-align:center"><span class="">6</span></div><div class="c" style="left:117px;width:263px;text-align:left"><span class="u">SA-20211208-003</span></div><div class="c" style="left:404px;width:178px;text-align:left"><span class="dt">2021-12-08</span></div><div class="c" style="left:582px;width:165px;text-align:right"><span class="u nm">1,600.00</span></div><div class="c" style="left:770px;width:164px;text-align:right"><span class="u nm">1,600.00</span></div><div class="c" style="left:957px;width:228px;text-align:right"><span class="nm">1,014.00</span></div><div class="c" style="left:1208px;width:165px;text-align:right"><span class="u nm">1,600.00</span></div><div class="c" style="left:1420px;width:126px;text-align:left"><span class="">63.38%</span></div><div class="c" style="left:1733px;width:165px;text-align:right"><span class="nm">0.00</span></div><div class="c" style="left:1921px;width:290px;text-align:right"><span class="nm">1,014.00</span></div><div class="c" style="left:2234px;width:165px;text-align:right"><span class="nm">63.38%</span></div><div class="c" style="left:2422px;width:164px;text-align:right"><span class="nm">1600.00</span></div></div>
<div class="row" style="top:883px;background:#fff"><div class="c" style="left:0px;width:93px;text-align:center"><span class="">7</span></div><div class="c" style="left:117px;width:263px;text-align:left"><span class="u">SA-20220226-001</span></div><div class="c" style="left:404px;width:178px;text-align:left"><span class="dt">2022-02-26</span></div><div class="c" style="left:582px;width:165px;text-align:right"><span class="u nm">4,200.00</span></div><div class="c" style="left:770px;width:164px;text-align:right"><span class="u nm">4,200.00</span></div><div class="c" style="left:957px;width:228px;text-align:right"><span class="nm">3,700.00</span></div><div class="c" style="left:1208px;width:165px;text-align:right"><span class="u nm">0.00</span></div><div class="c" style="left:1420px;width:126px;text-align:left"><span class="">88.10%</span></div><div class="c" style="left:1733px;width:165px;text-align:right"><span class="nm">0.00</span></div><div class="c" style="left:1921px;width:290px;text-align:right"><span class="nm">3,700.00</span></div><div class="c" style="left:2234px;width:165px;text-align:right"><span class="nm">88.10%</span></div><div class="c" style="left:2422px;width:164px;text-align:right"><span class="nm">4200.00</span></div></div>
<div class="row" style="top:943px;background:#f1f2f8"><div class="c" style="left:0px;width:93px;text-align:center"><span class="">8</span></div><div class="c" style="left:117px;width:263px;text-align:left"><span class="u">SA-20220329-001</span></div><div class="c" style="left:404px;width:178px;text-align:left"><span class="dt">2022-03-29</span></div><div class="c" style="left:582px;width:165px;text-align:right"><span class="u nm">700.00</span></div><div class="c" style="left:770px;width:164px;text-align:right"><span class="u nm">700.00</span></div><div class="c" style="left:957px;width:228px;text-align:right"><span class="nm">700.00</span></div><div class="c" style="left:1208px;width:165px;text-align:right"><span class="u nm">0.00</span></div><div class="c" style="left:1420px;width:126px;text-align:left"><span class="">100.00%</span></div><div class="c" style="left:1733px;width:165px;text-align:right"><span class="nm">0.00</span></div><div class="c" style="left:1921px;width:290px;text-align:right"><span class="nm">700.00</span></div><div class="c" style="left:2234px;width:165px;text-align:right"><span class="nm">100.00%</span></div><div class="c" style="left:2422px;width:164px;text-align:right"><span class="nm">700.00</span></div></div>
<div class="row" style="top:1003px;background:#fff"><div class="c" style="left:0px;width:93px;text-align:center"><span class="">9</span></div><div class="c" style="left:117px;width:263px;text-align:left"><span class="u">SA-20220413-001</span></div><div class="c" style="left:404px;width:178px;text-align:left"><span class="dt">2022-04-13</span></div><div class="c" style="left:582px;width:165px;text-align:right"><span class="u nm">379.00</span></div><div class="c" style="left:770px;width:164px;text-align:right"><span class="u nm">379.00</span></div><div class="c" style="left:957px;width:228px;text-align:right"><span class="nm">379.00</span></div><div class="c" style="left:1208px;width:165px;text-align:right"><span class="u nm">0.00</span></div><div class="c" style="left:1420px;width:126px;text-align:left"><span class="">100.00%</span></div><div class="c" style="left:1733px;width:165px;text-align:right"><span class="nm">0.00</span></div><div class="c" style="left:1921px;width:290px;text-align:right"><span class="nm">379.00</span></div><div class="c" style="left:2234px;width:165px;text-align:right"><span class="nm">100.00%</span></div><div class="c" style="left:2422px;width:164px;text-align:right"><span class="nm">379.00</span></div></div>
<div class="row" style="top:1063px;background:#f1f2f8"><div class="c" style="left:0px;width:93px;text-align:center"><span class="">10</span></div><div class="c" style="left:117px;width:263px;text-align:left"><span class="u">SA-20220414-007</span></div><div class="c" style="left:404px;width:178px;text-align:left"><span class="dt">2022-04-14</span></div><div class="c" style="left:582px;width:165px;text-align:right"><span class="u nm">16.42</span></div><div class="c" style="left:770px;width:164px;text-align:right"><span class="u nm">16.42</span></div><div class="c" style="left:957px;width:228px;text-align:right"><span class="nm">9.42</span></div><div class="c" style="left:1208px;width:165px;text-align:right"><span class="u nm">0.00</span></div><div class="c" style="left:1420px;width:126px;text-align:left"><span class="">57.37%</span></div><div class="c" style="left:1733px;width:165px;text-align:right"><span class="nm">0.00</span></div><div class="c" style="left:1921px;width:290px;text-align:right"><span class="nm">9.42</span></div><div class="c" style="left:2234px;width:165px;text-align:right"><span class="nm">57.37%</span></div><div class="c" style="left:2422px;width:164px;text-align:right"><span class="nm">16.42</span></div></div>
<div class="row" style="top:1123px;background:#fff"><div class="c" style="left:0px;width:93px;text-align:center"><span class="">11</span></div><div class="c" style="left:117px;width:263px;text-align:left"><span class="u">SA-20220415-001</span></div><div class="c" style="left:404px;width:178px;text-align:left"><span class="dt">2022-04-15</span></div><div class="c" style="left:582px;width:165px;text-align:right"><span class="u nm">1,648.00</span></div><div class="c" style="left:770px;width:164px;text-align:right"><span class="u nm">1,648.00</span></div><div class="c" style="left:957px;width:228px;text-align:right"><span class="nm">1,648.00</span></div><div class="c" style="left:1208px;width:165px;text-align:right"><span class="u nm">0.00</span></div><div class="c" style="left:1420px;width:126px;text-align:left"><span class="">100.00%</span></div><div class="c" style="left:1733px;width:165px;text-align:right"><span class="nm">0.00</span></div><div class="c" style="left:1921px;width:290px;text-align:right"><span class="nm">1,648.00</span></div><div class="c" style="left:2234px;width:165px;text-align:right"><span class="nm">100.00%</span></div><div class="c" style="left:2422px;width:164px;text-align:right"><span class="nm">1648.00</span></div></div>
<div class="row" style="top:1183px;background:#f1f2f8"><div class="c" style="left:0px;width:93px;text-align:center"><span class="">12</span></div><div class="c" style="left:117px;width:263px;text-align:left"><span class="u">SA-20220425-001</span></div><div class="c" style="left:404px;width:178px;text-align:left"><span class="dt">2022-04-25</span></div><div class="c" style="left:582px;width:165px;text-align:right"><span class="u nm">4,450.00</span></div><div class="c" style="left:770px;width:164px;text-align:right"><span class="u nm">3,938.05</span></div><div class="c" style="left:957px;width:228px;text-align:right"><span class="nm">1,604.75</span></div><div class="c" style="left:1208px;width:165px;text-align:right"><span class="u nm">0.00</span></div><div class="c" style="left:1420px;width:126px;text-align:left"><span class="">40.75%</span></div><div class="c" style="left:1733px;width:165px;text-align:right"><span class="nm">0.00</span></div><div class="c" style="left:1921px;width:290px;text-align:right"><span class="nm">1,604.75</span></div><div class="c" style="left:2234px;width:165px;text-align:right"><span class="nm">40.75%</span></div><div class="c" style="left:2422px;width:164px;text-align:right"><span class="nm">4450.00</span></div></div>
<div class="row" style="top:1243px;background:#fff"><div class="c" style="left:0px;width:93px;text-align:center"><span class="">13</span></div><div class="c" style="left:117px;width:263px;text-align:left"><span class="u">SA-20220425-002</span></div><div class="c" style="left:404px;width:178px;text-align:left"><span class="dt">2022-04-25</span></div><div class="c" style="left:582px;width:165px;text-align:right"><span class="u nm neg">-1,780.00</span></div><div class="c" style="left:770px;width:164px;text-align:right"><span class="u nm neg">-1,575.22</span></div><div class="c" style="left:957px;width:228px;text-align:right"><span class="nm neg">-641.90</span></div><div class="c" style="left:1208px;width:165px;text-align:right"><span class="u nm">0.00</span></div><div class="c" style="left:1420px;width:126px;text-align:left"><span class="">40.75%</span></div><div class="c" style="left:1733px;width:165px;text-align:right"><span class="nm">0.00</span></div><div class="c" style="left:1921px;width:290px;text-align:right"><span class="nm neg">-641.90</span></div><div class="c" style="left:2234px;width:165px;text-align:right"><span class="nm">40.75%</span></div><div class="c" style="left:2422px;width:164px;text-align:right"><span class="nm">-1780.00</span></div></div>
<div class="row" style="top:1303px;background:#f1f2f8"><div class="c" style="left:0px;width:93px;text-align:center"><span class="">14</span></div><div class="c" style="left:117px;width:263px;text-align:left"><span class="u">SA-20220425-004</span></div><div class="c" style="left:404px;width:178px;text-align:left"><span class="dt">2022-04-25</span></div><div class="c" style="left:582px;width:165px;text-align:right"><span class="u nm">1,137.00</span></div><div class="c" style="left:770px;width:164px;text-align:right"><span class="u nm">1,137.00</span></div><div class="c" style="left:957px;width:228px;text-align:right"><span class="nm">1,075.89</span></div><div class="c" style="left:1208px;width:165px;text-align:right"><span class="u nm">0.00</span></div><div class="c" style="left:1420px;width:126px;text-align:left"><span class="">94.63%</span></div><div class="c" style="left:1733px;width:165px;text-align:right"><span class="nm">0.00</span></div><div class="c" style="left:1921px;width:290px;text-align:right"><span class="nm">1,075.89</span></div><div class="c" style="left:2234px;width:165px;text-align:right"><span class="nm">94.63%</span></div><div class="c" style="left:2422px;width:164px;text-align:right"><span class="nm">1137.00</span></div></div>
<div class="row" style="top:1363px;background:#fff"><div class="c" style="left:0px;width:93px;text-align:center"><span class="">15</span></div><div class="c" style="left:117px;width:263px;text-align:left"><span class="u">SA-20220425-007</span></div><div class="c" style="left:404px;width:178px;text-align:left"><span class="dt">2022-04-25</span></div><div class="c" style="left:582px;width:165px;text-align:right"><span class="u nm">7,150.00</span></div><div class="c" style="left:770px;width:164px;text-align:right"><span class="u nm">6,327.43</span></div><div class="c" style="left:957px;width:228px;text-align:right"><span class="nm">5,723.73</span></div><div class="c" style="left:1208px;width:165px;text-align:right"><span class="u nm">0.00</span></div><div class="c" style="left:1420px;width:126px;text-align:left"><span class="">90.46%</span></div><div class="c" style="left:1733px;width:165px;text-align:right"><span class="nm">0.00</span></div><div class="c" style="left:1921px;width:290px;text-align:right"><span class="nm">5,723.73</span></div><div class="c" style="left:2234px;width:165px;text-align:right"><span class="nm">90.46%</span></div><div class="c" style="left:2422px;width:164px;text-align:right"><span class="nm">7150.00</span></div></div>
<div class="row" style="top:1423px;background:#f1f2f8"><div class="c" style="left:0px;width:93px;text-align:center"><span class="">16</span></div><div class="c" style="left:117px;width:263px;text-align:left"><span class="u">SA-20220429-001</span></div><div class="c" style="left:404px;width:178px;text-align:left"><span class="dt">2022-04-29</span></div><div class="c" style="left:582px;width:165px;text-align:right"><span class="u nm">30.00</span></div><div class="c" style="left:770px;width:164px;text-align:right"><span class="u nm">26.55</span></div><div class="c" style="left:957px;width:228px;text-align:right"><span class="nm">12.55</span></div><div class="c" style="left:1208px;width:165px;text-align:right"><span class="u nm">0.00</span></div><div class="c" style="left:1420px;width:126px;text-align:left"><span class="">47.27%</span></div><div class="c" style="left:1733px;width:165px;text-align:right"><span class="nm">0.00</span></div><div class="c" style="left:1921px;width:290px;text-align:right"><span class="nm">12.55</span></div><div class="c" style="left:2234px;width:165px;text-align:right"><span class="nm">47.27%</span></div><div class="c" style="left:2422px;width:164px;text-align:right"><span class="nm">30.00</span></div></div>
<div class="row" style="top:1483px;background:#fff"><div class="c" style="left:0px;width:93px;text-align:center"><span class="">17</span></div><div class="c" style="left:117px;width:263px;text-align:left"><span class="u">SA-20220505-001</span></div><div class="c" style="left:404px;width:178px;text-align:left"><span class="dt">2022-05-05</span></div><div class="c" style="left:582px;width:165px;text-align:right"><span class="u nm">20.00</span></div><div class="c" style="left:770px;width:164px;text-align:right"><span class="u nm">20.00</span></div><div class="c" style="left:957px;width:228px;text-align:right"><span class="nm">20.00</span></div><div class="c" style="left:1208px;width:165px;text-align:right"><span class="u nm">0.00</span></div><div class="c" style="left:1420px;width:126px;text-align:left"><span class="">100.00%</span></div><div class="c" style="left:1733px;width:165px;text-align:right"><span class="nm">0.00</span></div><div class="c" style="left:1921px;width:290px;text-align:right"><span class="nm">20.00</span></div><div class="c" style="left:2234px;width:165px;text-align:right"><span class="nm">100.00%</span></div><div class="c" style="left:2422px;width:164px;text-align:right"><span class="nm">20.00</span></div></div>
<div class="a" style="left:271px;top:1542px;width:2741px;height:1px;background:#d9dbe3"></div>
<div class="row tot" style="top:1545px;background:#fdefd9;border-bottom:1px solid #e6e2da"><div class="a" style="left:93px;top:0;width:1px;height:60px;background:#e3dccf"></div><div class="c" style="left:117px;width:263px;text-align:left"><span class=""><span style="font-size:22.5px">合计</span></span></div><div class="c" style="left:606px;width:164px;text-align:left"><span class="b">45,494,18...</span></div><div class="c" style="left:794px;width:163px;text-align:left"><span class="b">45,056,66...</span></div><div class="c" style="left:957px;width:228px;text-align:right"><span class="b">18,984,902.06</span></div><div class="c" style="left:1546px;width:164px;text-align:right"><span class="b">605.00</span></div><div class="c" style="left:1733px;width:165px;text-align:right"><span class="b">110,353.00</span></div><div class="c" style="left:1921px;width:290px;text-align:right"><span class="b">18,873,944.06</span></div><div class="c" style="left:2446px;width:163px;text-align:left"><span class="b">45494188....</span></div></div>
<div class="a" style="left:2998px;top:528px;width:17px;height:55px;border-radius:9px;background:#b3b3b4"></div>
<div class="red" style="left:2px;top:532px;width:206px;height:79px"></div>
</body></html>
